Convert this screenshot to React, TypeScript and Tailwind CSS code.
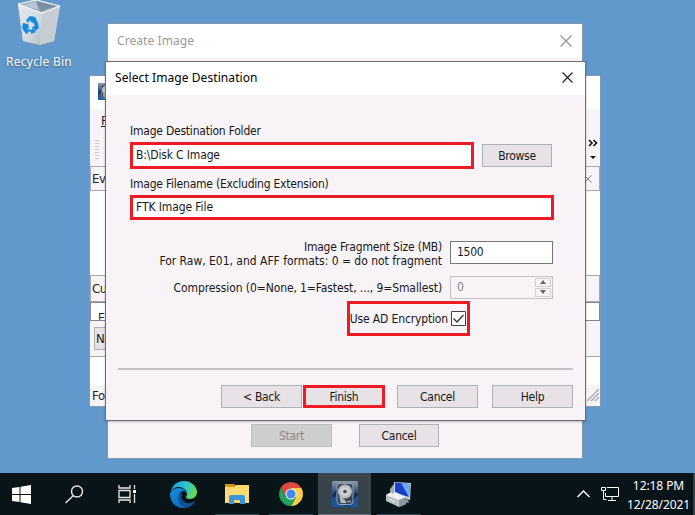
import type { ReactNode } from "react";

const TAHOMA = "font-['DejaVu_Sans_Condensed','DejaVu_Sans',sans-serif] font-stretch-condensed";

function Close({ color, size = 11 }: { color: string; size?: number }) {
  return (
    <svg width={size} height={size} viewBox="0 0 11 11" stroke={color} strokeWidth="1.2" fill="none">
      <path d="M.5.5l10 10M10.5.5l-10 10" />
    </svg>
  );
}

function Button({ children, className = "" }: { children: ReactNode; className?: string }) {
  return (
    <button className={`flex h-[23px] shrink-0 items-center justify-center border border-[#adb0b4] bg-[#e6e2e6] text-[#181818] ${className}`}>
      <span>{children}</span>
    </button>
  );
}

function RecycleBin() {
  return (
    <svg width="42" height="46" viewBox="0 0 42 46">
      <defs>
        <linearGradient id="bin" x1="0" x2="1" y1="0" y2="1">
          <stop offset="0" stopColor="#e6ebef" />
          <stop offset=".6" stopColor="#d3dae1" />
          <stop offset="1" stopColor="#b4bbc4" />
        </linearGradient>
      </defs>
      <path d="M5 41l17 5 13-4-12-3z" fill="#867f79" opacity=".7" />
      <path d="M0 4L18 0 42 6 36 41 22 45 5 41z" fill="#d1d8e0" />
      <path d="M1 4L18 0 41 6 24 13z" fill="#90a5b9" />
      <path d="M4 5l14-4 3 9z" fill="#bac5d0" />
      <path d="M18 1l20 5-16 5z" fill="#798fa5" />
      <path d="M0 4l24 9-2 32-17-4z" fill="url(#bin)" />
      <path d="M24 13l18-7-6 35-14 4z" fill="#c5ccd3" />
      <path d="M0 4L18 0 42 6 24 13z" fill="none" stroke="#f5f8fa" strokeWidth="1.2" />
      <g fill="#168bde">
        <path d="M8 20l4-4 5 1 2 4-5 2-2-3-2 3z" />
        <path d="M17 19l3 4 1 5-4 3-3-4 3-1-2-4z" />
        <path d="M5 23l5 1 1 4-2 1 2 3-3 2-4-6z" />
        <path d="M10 29l4 1v-2l4 4-5 2v-2l-3-1z" />
      </g>
    </svg>
  );
}

function DiskIcon({ size = 26 }: { size?: number }) {
  return (
    <svg width={size} height={size} viewBox="0 0 26 26">
      <defs>
        <linearGradient id="disk" x1="0" x2="0" y1="0" y2="1">
          <stop offset="0" stopColor="#8b9bb0" />
          <stop offset=".45" stopColor="#2d4d7b" />
          <stop offset="1" stopColor="#1459a5" />
        </linearGradient>
      </defs>
      <rect width="26" height="26" rx="1.5" fill="url(#disk)" />
      <path d="M1 16L11 3M15 25L25 12" stroke="#153057" strokeWidth="3" />
      <rect x="5" y="2.5" width="16" height="21" rx="3" fill="#3a4656" stroke="#aeb8c3" strokeWidth=".8" />
      <circle cx="13" cy="10.5" r="7" fill="#b9bec3" />
      <circle cx="13" cy="10.5" r="4.5" fill="#cdd1d5" />
      <circle cx="13" cy="10.5" r="1.8" fill="#3c4651" />
      <path d="M9 21.500l-1-6 3 2 3 4zM15 20l4 1" stroke="#bcc4cc" fill="#aab1b8" />
    </svg>
  );
}

function EdgeIcon() {
  return (
    <svg width="27" height="27" viewBox="0 0 27 27">
      <defs>
        <linearGradient id="edgeTop" x1="0" x2="1" y1=".3" y2=".6">
          <stop offset="0" stopColor="#1f9fe0" />
          <stop offset=".5" stopColor="#2bc3d2" />
          <stop offset="1" stopColor="#6bdc43" />
        </linearGradient>
        <linearGradient id="edgeLeft" x1="0" x2="1" y1="0" y2="1">
          <stop offset="0" stopColor="#168fe4" />
          <stop offset="1" stopColor="#075faf" />
        </linearGradient>
      </defs>
      <path d="M1 11C2 4 7 0 14 0c8 0 13 6 13 11 0 4-3 7-7 7-3 0-4-1-4-2 0-1 1-1 1-3 0-4-4-7-8-7-4 0-7 2-8 5z" fill="url(#edgeTop)" />
      <path d="M0 13C1 9 5 7 9 7c5 0 8 3 8 6 0-2-2-3-4-3-5 1-5 8-1 11 4 3 9 2 13-1-2 4-6 7-12 7C5 27 0 20 0 13z" fill="url(#edgeLeft)" />
      <path d="M9 13c-2 5 0 11 6 13.500 4-.5 8-3 10-6.500-4 3-9 3-12-.5-2-2-2-5-.5-7.500z" fill="#124e91" />
    </svg>
  );
}

function FolderIcon() {
  return (
    <svg width="24" height="20" viewBox="0 0 24 20">
      <path d="M0 0h9l2 2h-2v3H0z" fill="#d99512" />
      <path d="M0 3h9l2-2h13v18H0z" fill="#ffd766" />
      <path d="M0 5h24v14H0z" fill="#ffdc72" />
      <path d="M4 20v-7q0-2 2-2h12q2 0 2 2v7h-5v-4H9v4z" fill="#3995df" />
      <path d="M9 16h6v3H9z" fill="#f7d45f" />
    </svg>
  );
}

function ChromeIcon() {
  return (
    <svg width="24" height="24" viewBox="0 0 24 24">
      <path d="M1.610 6A12 12 0 0 1 22.390 6H12L6.800 15z" fill="#dd4b3e" />
      <path d="M22.390 6A12 12 0 0 1 12 24l5.200-9L12 6z" fill="#fdce46" />
      <path d="M12 24A12 12 0 0 1 1.610 6l5.200 9H17.200z" fill="#23a25d" />
      <circle cx="12" cy="12" r="5.600" fill="#f2f4f5" />
      <circle cx="12" cy="12" r="4.500" fill="#4487ed" />
    </svg>
  );
}

function ComputerIcon() {
  return (
    <svg width="26" height="26" viewBox="0 0 26 26">
      <path d="M8 1l17 1-1 17-16-4z" fill="#c7d2df" />
      <path d="M9 1.500l15 1.500-1 13-14-4z" fill="#183fc8" />
      <path d="M15 2l9 1-1 13z" fill="#6dabf4" />
      <path d="M13 17l9 2 1 3-8-1z" fill="#8b9baa" />
      <path d="M0 14l7-4 13 6v7l-7 3-13-6z" fill="#bfc7cc" />
      <path d="M0 14l7-4 13 6-7 3z" fill="#eef1f1" />
      <path d="M13 19l7-3v7l-7 3z" fill="#8e989f" />
      <path d="M2 16l8 4v3l-8-4z" fill="#dce1e4" stroke="#858f97" strokeWidth=".5" />
      <path d="M4 8l4-5v10l-4-2z" fill="#9baabd" />
    </svg>
  );
}

function MainWindow() {
  return (
    <section className="absolute left-[89px] top-[75px] flex h-[332px] w-[512px] flex-col border border-[#8298ae] bg-[#f7f3f7] text-[13px] text-[#222]">
      <div className="flex h-[33px] shrink-0 items-start bg-white pl-[8px] pt-[7px]"><DiskIcon size={17} /></div>
      <div className="flex h-[57px] shrink-0 justify-between">
        <div className="flex flex-col pl-[5px]">
          <span className="pl-[6px] pt-[4px] leading-[16px] underline">F</span>
          <div className="mt-[11px] h-[20px] w-[4px] bg-[repeating-linear-gradient(#ccc8cc_0_1px,transparent_1px_3px)]" />
        </div>
        <svg className="mr-[2px] mt-[30px]" width="10" height="22" viewBox="0 0 10 22">
          <path d="M1 1l3 3-3 3M5.500 1l3 3-3 3" fill="none" stroke="#111" strokeWidth="1.600" />
          <path d="M2 17h6l-3 3z" fill="#111" />
        </svg>
      </div>
      <div className="flex h-[25px] shrink-0 items-center justify-between border border-[#aaa6aa] pl-[1px] pr-[7px]"><span>Ev</span><Close color="#777" size={8} /></div>
      <div className="h-[84px] shrink-0 bg-white" />
      <div className="flex h-[27px] shrink-0 items-center border border-[#aaa6aa] pl-[1px]">Cu</div>
      <div className="flex h-[19px] shrink-0 items-start overflow-hidden border border-[#85859a] bg-white pl-[7px] pt-[8px] text-[12px] leading-[14px]">E</div>
      <div className="flex h-[36px] shrink-0 items-center border-b border-[#aaa6aa] pl-[4px]"><Button className="w-[60px] !justify-start pl-[1px]">Ne</Button></div>
      <div className="h-[28px] shrink-0 bg-white" />
      <div className="flex flex-1 items-center justify-between pl-[2px]">
        <span>Fo</span>
        <svg width="13" height="13" viewBox="0 0 13 13" stroke="#aaa6aa" strokeWidth="1.300"><path d="M0 12L12 0M4 12l8-8M8 12l4-4" /></svg>
      </div>
    </section>
  );
}

function CreateWindow() {
  return (
    <section className="absolute left-[107px] top-[23px] flex h-[436px] w-[476px] flex-col border border-[#8297ac] bg-[#f7f3f7]">
      <header className="flex h-[34px] shrink-0 items-center justify-between bg-white pl-[9px] pr-[10px] font-['Noto_Sans',sans-serif] text-[12px] tracking-[0.08px] text-[#9b9b9b]">
        <span>Create Image</span><Close color="#999" size={12} />
      </header>
      <div className="mt-auto flex gap-[27px] pb-[11px] pl-[143px]">
        <Button className="w-[81px] !border-[#bebebe] !bg-[#cecece] !text-[#8b8b8b]">Start</Button>
        <Button className="w-[80px]">Cancel</Button>
      </div>
    </section>
  );
}

function DestinationDialog() {
  return (
    <section className="absolute left-[105px] top-[61px] flex h-[360px] w-[481px] flex-col border border-[#6e6e72] bg-[#f7f3f7] shadow-[0_1px_2px_rgba(0,0,0,.25)]">
      <header className="flex h-[33px] shrink-0 items-center justify-between bg-white pb-[2px] pl-[9px] pr-[12px] font-['Noto_Sans',sans-serif] text-[12px] tracking-[0.08px] text-black">
        <span>Select Image Destination</span><Close color="#222" />
      </header>
      <div className="flex flex-col pl-[24px] pt-[28px]">
        <label className="leading-[16px] tracking-[-0.22px]">Image Destination Folder</label>
        <div className="mt-[3px] flex items-center gap-[8px]">
          <div className="flex h-[27px] w-[344px] items-center border-3 border-[#ed1c24] bg-white pb-px pl-[3px] tracking-[-0.15px]">B:\Disk C Image</div>
          <Button className="w-[70px]">Browse</Button>
        </div>
        <label className="mt-[7px] leading-[16px] tracking-[-0.22px]">Image Filename (Excluding Extension)</label>
        <div className="mt-[3px] flex h-[25px] w-[424px] items-center border-3 border-[#ed1c24] bg-white pb-px pl-[3px] tracking-[-0.1px]">FTK Image File</div>
      </div>
      <div className="mt-[19px] flex h-[29px] gap-[8px]">
        <div className="w-[336px] whitespace-nowrap pt-px text-right leading-[14px]"><p className="tracking-[-0.2px]">Image Fragment Size (MB)</p><p className="tracking-[-0.02px]">For Raw, E01, and AFF formats: 0 = do not fragment</p></div>
        <div className="mt-[2px] flex h-[23px] w-[103px] items-center border border-[#77777b] bg-white pb-px pl-[6px]">1500</div>
      </div>
      <div className="mt-[7px] flex h-[24px] items-center gap-[8px]">
        <span className="w-[336px] whitespace-nowrap pt-px text-right tracking-[-0.1px]">Compression (0=None, 1=Fastest, ..., 9=Smallest)</span>
        <div className="flex h-[23px] w-[103px] items-center justify-between border border-[#c4c1c4] pl-[6px] text-[#858585]">
          <span>0</span>
          <div className="flex h-full w-[18px] flex-col gap-px p-px">
            <span className="flex flex-1 items-center justify-center border border-[#d2ced2]"><svg width="6" height="4"><path d="M0 4l3-4 3 4z" fill="#666" /></svg></span>
            <span className="flex flex-1 items-center justify-center border border-[#d2ced2]"><svg width="6" height="4"><path d="M0 0l3 4 3-4z" fill="#666" /></svg></span>
          </div>
        </div>
      </div>
      <div className="ml-[241px] mt-[2px] flex h-[35px] w-[123px] items-center justify-end gap-[3px] border-3 border-[#ed1c24] pr-px">
        <label className="shrink-0 whitespace-nowrap tracking-[-0.15px]">Use AD Encryption</label>
        <svg className="shrink-0" width="15" height="15" viewBox="0 0 15 15" fill="none"><path d="M.5.5h14v14H.5z" fill="#fff" stroke="#444" /><path d="M2.500 7.500l3.500 3.500 6.500-7" stroke="#333" strokeWidth="1.300" /></svg>
      </div>
      <div className="ml-[12px] mt-[32px] h-[2px] w-[455px] bg-[#c6c2c6]" />
      <footer className="ml-[115px] mt-[15px] flex">
        <Button className="w-[81px]">&lt; Back</Button>
        <Button className="ml-px w-[82px] !border-3 !border-[#ed1c24]">Finish</Button>
        <Button className="ml-[12px] w-[81px]">Cancel</Button>
        <Button className="ml-[14px] w-[81px]">Help</Button>
      </footer>
    </section>
  );
}

function Taskbar() {
  return (
    <footer className="mt-auto flex h-[42px] w-full items-center bg-[#091418] font-['Noto_Sans',sans-serif] text-[12px] tracking-[-0.08px] text-white">
      <svg className="ml-[12px]" width="19" height="19" viewBox="0 0 19 19" fill="white"><path d="M0 3l7.500-1.100V9H0zM8.500 1.700L19 0v9H8.500zM0 10h7.500v7L0 16zM8.500 10H19v9L8.500 17.300z" /></svg>
      <svg className="ml-[34px]" width="19" height="19" viewBox="0 0 19 19" fill="none" stroke="#e6e8e9" strokeWidth="1.400"><circle cx="12" cy="6.500" r="5.500" /><path d="M8 11L.5 18" /></svg>
      <svg className="ml-[34px]" width="19" height="18" viewBox="0 0 19 18" fill="none" stroke="#e6e8e9" strokeWidth="1.300"><path d="M1 0v3h11V0M1 5.500h11v7H1zM1 18v-3h11v3M16.500 0v4M16.500 9v9" /><path d="M15 5h3v3h-3z" fill="white" stroke="none" /></svg>
      <div className="ml-[33px]"><EdgeIcon /></div>
      <div className="ml-[18px] flex h-full w-[44px] items-center justify-center border-b border-[#354e5c]"><FolderIcon /></div>
      <div className="ml-[10px] flex h-full w-[44px] items-center justify-center border-b border-[#354e5c]"><ChromeIcon /></div>
      <div className="ml-[5px] flex h-full w-[53px] items-center justify-center border-b border-[#5d7180] bg-[#39444a]"><DiskIcon /></div>
      <div className="ml-[6px] flex h-full w-[44px] items-center justify-center border-b border-[#354e5c]"><ComputerIcon /></div>
      <svg className="ml-auto" width="13" height="8" viewBox="0 0 13 8" fill="none" stroke="white" strokeWidth="1.400"><path d="M.5 7l6-6 6 6" /></svg>
      <svg className="ml-[11px]" width="18" height="16" viewBox="0 0 18 16" fill="none" stroke="white"><path d="M6 1.500h11.500v9H4.500V7M11 10.500v4M7 14.500h8M.5 1.500h4v3h-4zM2.500 4.500v9h3" /></svg>
      <div className="ml-[8px] flex w-[63px] flex-col items-center whitespace-nowrap pt-px leading-[19px]"><span>12:18 PM</span><span>12/28/2021</span></div>
      <div className="ml-[3px] h-full w-[2px] bg-[#354148]" />
    </footer>
  );
}

export default function App() {
  return (
    <main className={`relative flex h-[515px] w-[695px] flex-col overflow-hidden bg-[#6299cd] text-[12px] tracking-[-0.3px] text-[#181818] ${TAHOMA}`}>
      <div className="flex w-[78px] flex-col items-center font-['Noto_Sans',sans-serif] text-[12px] tracking-[0.25px] text-white">
        <RecycleBin />
        <span className="mt-[7px] leading-[17px] [text-shadow:0_1px_2px_#345573]">Recycle Bin</span>
      </div>
      <MainWindow />
      <CreateWindow />
      <DestinationDialog />
      <Taskbar />
    </main>
  );
}
